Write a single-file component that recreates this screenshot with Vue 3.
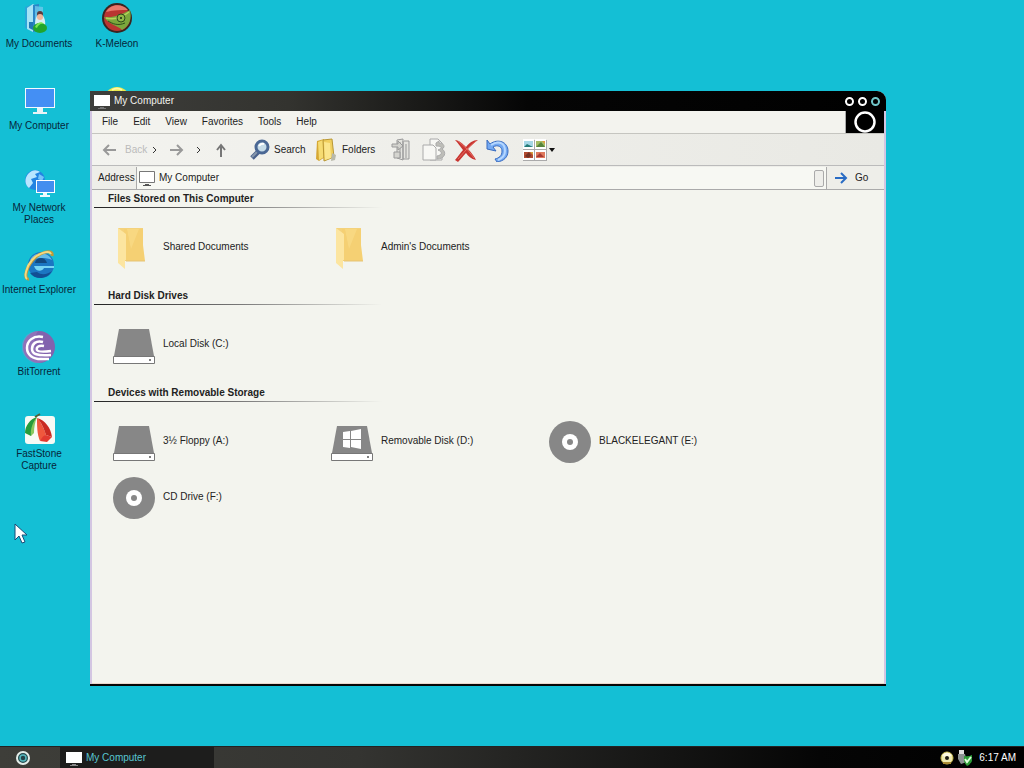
<script setup>
import { ref } from 'vue'

const address = ref('My Computer')
const menus = ['File', 'Edit', 'View', 'Favorites', 'Tools', 'Help']

const shortcuts = [
  { id: 'documents', label: 'My Documents' },
  { id: 'computer', label: 'My Computer' },
  { id: 'network', label: 'My Network Places' },
  { id: 'explorer', label: 'Internet Explorer' },
  { id: 'torrent', label: 'BitTorrent' },
  { id: 'faststone', label: 'FastStone Capture' },
]

const groups = [
  {
    title: 'Files Stored on This Computer',
    items: [
      { icon: 'folder', label: 'Shared Documents' },
      { icon: 'folder', label: "Admin's Documents" },
    ],
  },
  { title: 'Hard Disk Drives', items: [{ icon: 'disk', label: 'Local Disk (C:)' }] },
  {
    title: 'Devices with Removable Storage',
    items: [
      { icon: 'disk', label: '3½ Floppy (A:)' },
      { icon: 'windisk', label: 'Removable Disk (D:)' },
      { icon: 'disc', label: 'BLACKELEGANT (E:)' },
      { icon: 'disc', label: 'CD Drive (F:)' },
    ],
  },
]
</script>

<template>
  <div class="screen">
    <main class="desktop">
      <div class="shortcuts">
        <div class="column">
          <button v-for="s in shortcuts" :key="s.id" class="shortcut" type="button">
            <svg class="shortcut-icon" viewBox="2 0 34 34" aria-hidden="true">
              <g v-if="s.id === 'documents'">
                <path d="M5 5 13 2v27l-8-3z" fill="#2aa5d8" />
                <path d="M7 6 13 2l3 2v24l-3 2-6-3z" fill="#a6e3f5" />
                <path d="m13 3 6-1v27l-6 1z" fill="#2b86c8" />
                <path d="m15 4 8 1v23l-8 1z" fill="#6fc9ec" opacity=".8" />
                <path d="M9 20h4v8l-4-2z" fill="#2178b5" />
                <path d="M15 24c0-8 2-12 5-12s6 5 5 12z" fill="#d8eef5" />
                <circle cx="20" cy="12" r="3" fill="#5b3b3d" />
                <circle cx="20" cy="15" r="3" fill="#eeb69a" />
                <ellipse cx="20" cy="26" rx="7" ry="5" fill="#21a52c" />
                <path d="M15 25c2-5 7-6 9-3-3-1-6 1-7 4z" fill="#7be651" />
              </g>
              <g v-else-if="s.id === 'computer'">
                <path d="M5 4h30v20H5z" fill="#f4fbff" />
                <path d="M6 5h28v18H6z" fill="#448ff4" />
                <path d="M17 24h6v4h4v2H13v-2h4z" fill="#e8f3f6" />
              </g>
              <g v-else-if="s.id === 'network'">
                <circle cx="15" cy="14" r="10" fill="#2384e2" />
                <path d="M8 8c5-5 9-4 12-2l-5 2 2 3-6 2 2 4-4 5C5 19 4 13 8 8z" fill="#b9e6ff" />
                <path d="m19 8 5 3-2 4-4-2z" fill="#75c4fa" />
                <path d="M16 14h19v13H16z" fill="#fff" />
                <path d="M17 15h17v11H17z" fill="#438eef" />
                <path d="M23 27h4v2h3v2H20v-2h3z" fill="#eefaff" />
              </g>
              <g v-else-if="s.id === 'explorer'">
                <circle cx="21" cy="17" r="13" fill="#1b76c2" />
                <path d="M10 12c4-9 18-9 22 0-7-3-15-2-22 0z" fill="#64bce8" />
                <path d="M15 15c1-6 10-7 12 0z" fill="#13497f" />
                <path d="M14 18h20v2H24c-2 4-8 4-10-2z" fill="#78d5f4" />
                <path d="M10 25c4 6 16 8 22-2-4 3-10 5-15 1z" fill="#124f94" />
                <path d="M32 8C34 0 19 4 12 13 5 22 4 32 9 31" fill="none" stroke="#c39a38" stroke-width="3" />
                <path d="M31 6C29 2 18 5 12 12 6 19 4 29 7 31" fill="none" stroke="#f5d980" stroke-width="2" />
              </g>
              <g v-else-if="s.id === 'torrent'">
                <circle cx="19" cy="17" r="16" fill="#8263ae" />
                <path d="M18 1a16 16 0 1 0 9 29 19 19 0 0 1-9-29z" fill="#a58acb" opacity=".4" />
                <g fill="none" stroke="#fff" stroke-width="2.500">
                  <path d="M23 7C13 5 7 11 7 18s6 11 14 11h8" />
                  <path d="M23 12c-7-2-11 2-11 7s5 7 19 6" />
                  <path d="M24 16c-5-1-8 1-7 4 1 2 6 2 14 1" />
                </g>
              </g>
              <g v-else>
                <rect x="5" y="4" width="30" height="28" rx="3" fill="#f8faf5" />
                <path d="M17 5C10 7 5 14 5 21l6 3c1-8 3-14 6-19z" fill="#269b3b" />
                <path d="M17 5c-4 5-7 12-6 19l3-3c0-6 1-11 3-16z" fill="#8bc85e" />
                <path d="M17 6c0 7 0 17 3 23l6-6c-2-7-5-13-9-17z" fill="#f0583d" />
                <path d="M17 6c5 5 7 11 9 17l6 2c-1-9-7-17-15-19z" fill="#c92b22" />
                <path d="M20 29c2-4 4-6 6-6l6 2-5 5z" fill="#e23a30" />
                <path d="m15 5 5-3" stroke="#526037" stroke-width="2" />
              </g>
            </svg>
            <span>{{ s.label }}</span>
          </button>
        </div>
        <div class="column">
          <button class="shortcut" type="button">
            <svg class="shortcut-icon" viewBox="0 0 34 34" aria-hidden="true">
              <circle cx="17" cy="16" r="15" fill="#3b2420" />
              <circle cx="17" cy="16" r="13" fill="#b93531" />
              <path d="M6 10c4-8 16-9 22-2-7 0-14 0-22 2z" fill="#e8796c" />
              <path d="M4 15c7 1 15-1 26-7 2 8 0 16-8 20-3-4-13-5-18-13z" fill="#7ba83c" />
              <path d="M6 16c7 2 16 0 23-6" fill="none" stroke="#b7d35c" stroke-width="1.500" />
              <circle cx="21" cy="16" r="4" fill="#8fb848" stroke="#2d4a1b" />
              <circle cx="21" cy="16" r="1" fill="#172613" />
              <path d="M8 19c5 3 10 5 17 2" fill="none" stroke="#304f1c" />
            </svg>
            <span>K-Meleon</span>
          </button>
          <button class="shortcut" type="button" aria-label="Disc">
            <svg class="shortcut-icon" viewBox="0 0 34 34" aria-hidden="true">
              <circle cx="17" cy="16" r="13" fill="#e9e84b" />
              <path d="M12 6q5-3 10 0" stroke="#fff8a8" stroke-width="2" fill="none" />
            </svg>
          </button>
        </div>
      </div>

      <section class="window" aria-label="My Computer">
        <header class="titlebar">
          <svg class="monitor" viewBox="0 0 16 16" aria-hidden="true">
            <path d="M0 2h16v11H0z" fill="#fff" /><path d="M6 14h4v1h2v1H4v-1h2z" fill="#777" />
          </svg>
          <h1>My Computer</h1>
          <div class="controls">
            <button type="button" aria-label="Minimize"></button>
            <button type="button" aria-label="Maximize"></button>
            <button type="button" class="close" aria-label="Close"></button>
          </div>
        </header>

        <div class="frame">
          <div class="menubar">
            <nav class="menus">
              <button v-for="m in menus" :key="m" type="button">{{ m }}</button>
            </nav>
            <div class="brand">
              <svg viewBox="0 0 38 22" aria-hidden="true"><circle cx="19" cy="11" r="9.500" fill="none" stroke="#fff" stroke-width="2.500" /></svg>
            </div>
          </div>

          <div class="toolbar">
            <button class="tool nav-back" type="button" disabled>
              <svg viewBox="0 0 14 14" aria-hidden="true"><path d="M7 2 2 7l5 5M2 7h12" fill="none" stroke="#999" stroke-width="2" /></svg>
              <span>Back</span>
            </button>
            <button class="tool chev" type="button" aria-label="Back history"><svg viewBox="0 0 6 8" aria-hidden="true"><path d="m1 1 3 3-3 3" fill="none" stroke="#333" /></svg></button>
            <button class="tool forward" type="button" disabled aria-label="Forward">
              <svg viewBox="0 0 14 14" aria-hidden="true"><path d="m7 2 5 5-5 5M12 7H0" fill="none" stroke="#999" stroke-width="2" /></svg>
            </button>
            <button class="tool chev" type="button" aria-label="Forward history"><svg viewBox="0 0 6 8" aria-hidden="true"><path d="m1 1 3 3-3 3" fill="none" stroke="#333" /></svg></button>
            <button class="tool up" type="button" aria-label="Up">
              <svg viewBox="0 0 14 14" aria-hidden="true"><path d="m3 7 4-5 4 5M7 2v12" fill="none" stroke="#777" stroke-width="2" /></svg>
            </button>
            <button class="tool search" type="button">
              <svg viewBox="0 0 24 24" aria-hidden="true">
                <path d="m10 13-7 7" stroke="#4b618a" stroke-width="5" />
                <path d="m9 13-6 6" stroke="#8797ac" stroke-width="2" />
                <circle cx="13" cy="9" r="6" fill="#c5dbe8" stroke="#4a6794" stroke-width="3" />
                <path d="M10 8q2-3 5-2" fill="none" stroke="#fff" stroke-width="2" />
              </svg>
              <span>Search</span>
            </button>
            <button class="tool folders" type="button">
              <svg viewBox="0 0 24 24" aria-hidden="true">
                <path d="m3 3 7-2 1 18-6 4-3-2z" fill="#d6a834" />
                <path d="M4 4 9 2l1 17-5 3z" fill="#f6dc72" />
                <path d="m9 2 9-1 2 18-10 4z" fill="#f0cf5e" stroke="#b89735" />
                <path d="m10 4 6 1 1 15-6 2z" fill="#fbe68c" />
                <path d="m18 15 4 2-1 5-4 1z" fill="#b8b9aa" />
              </svg>
              <span>Folders</span>
            </button>
            <button class="tool big" type="button" disabled aria-label="Move to">
              <svg viewBox="0 0 24 24" aria-hidden="true" fill="#e4e4df" stroke="#999">
                <path d="M7 2l6-1v21l-6-2zM14 3h5v18h-6V3M10 4v16M16 6v14" /><path d="M2 6h6V3l5 5-5 4V9H2zM4 14h6v6H4z" fill="#d4d4cf" />
              </svg>
            </button>
            <button class="tool big" type="button" disabled aria-label="Copy to">
              <svg viewBox="0 0 24 24" aria-hidden="true" fill="#f7f7f4" stroke="#aaa">
                <path d="M8 1h8l4 4v17H8z" /><path d="M1 7h10l3 3v12H1z" /><path d="M14 5l3-2v2c6 0 6 5 3 6 5 3 3 10-5 10v-3c5-1 6-4 1-6 5-2 4-4-2-4z" fill="#bdbdb8" />
              </svg>
            </button>
            <button class="tool big" type="button" aria-label="Delete">
              <svg viewBox="0 0 24 24" aria-hidden="true">
                <path d="M1 2c4 0 8 4 11 7 3-4 7-7 12-7-4 3-8 6-10 9 3 3 6 7 8 11-5-1-8-4-10-7-3 3-5 6-8 9l-3-2c3-3 5-7 8-10C6 8 4 5 1 2z" fill="#c83632" />
                <path d="m4 3 9 8 7 9M22 3 12 12l-8 9" fill="none" stroke="#e36a60" />
              </svg>
            </button>
            <button class="tool undo" type="button" aria-label="Undo">
              <svg viewBox="0 0 24 24" aria-hidden="true">
                <path d="M1 2v9l9 2-3-4c5-3 9 0 9 4 0 5-3 7-7 8l2 3c7-1 11-5 11-11C22 4 12 0 4 6z" fill="#75aaf2" stroke="#386bbf" />
                <path d="M5 7c8-5 14-2 14 6 0 4-2 7-7 9" fill="none" stroke="#b5d7ff" stroke-width="2" />
              </svg>
            </button>
            <button class="tool views" type="button" aria-label="Views">
              <svg viewBox="0 0 34 24" aria-hidden="true">
                <path d="M1 2h24v21H1z" fill="#aaa" /><path d="M1 1h11v10H1zM13 1h11v10H13zM1 12h11v10H1zM13 12h11v10H13z" fill="#fff" />
                <path d="M2 3h9v6H2z" fill="#a6d7e6" /><path d="m2 9 3-3 6 3z" fill="#247b76" />
                <path d="M14 3h9v6h-9z" fill="#a5bd66" /><path d="m14 9 5-5 4 5z" fill="#56843c" /><path d="M20 3h3v3z" fill="#e19b3d" />
                <path d="M2 14h9v6H2z" fill="#b14a2e" /><path d="m3 18 4-4 2 4-3 2z" fill="#743122" /><path d="M8 14h3v3z" fill="#d8a33b" />
                <path d="M14 14h9v6h-9z" fill="#df7a5d" /><path d="m14 19 4-4 4 4z" fill="#a83932" />
                <path d="M27 10h6l-3 4z" fill="#111" />
              </svg>
            </button>
          </div>

          <form class="addressbar" @submit.prevent>
            <label for="address">Address</label>
            <div class="field">
              <svg class="address-icon" viewBox="0 0 18 18" aria-hidden="true">
                <path d="M1.500 2.500h15v11h-15z" fill="#fff" stroke="#777" /><path d="M7 15h4v1h2v1H5v-1h2z" fill="#555" />
              </svg>
              <input id="address" v-model="address" type="text" />
              <button class="drop" type="button" aria-label="Show addresses"></button>
            </div>
            <button class="go" type="submit">
              <svg viewBox="0 0 14 14" aria-hidden="true"><path d="m7 2 5 5-5 5M12 7H1" fill="none" stroke="#2a6cc4" stroke-width="2" /></svg>
              <span>Go</span>
            </button>
          </form>

          <div class="content">
            <section v-for="g in groups" :key="g.title" class="group">
              <h2>{{ g.title }}</h2>
              <div class="items">
                <button v-for="i in g.items" :key="i.label" class="item" type="button">
                  <svg viewBox="0 0 44 44" aria-hidden="true">
                    <g v-if="i.icon === 'folder'">
                      <path d="M6 3h25v5H6z" fill="#f4d27c" />
                      <path d="M12 4h19v16l2 16H13z" fill="#f5d073" />
                      <path d="M15 4h12l-8 20z" fill="#f9dc88" opacity=".7" />
                      <path d="m6 3 8 6v26h-1v9l-7-6z" fill="#fce5a0" />
                      <path d="M14 36h19" stroke="#e6c374" />
                    </g>
                    <g v-else-if="i.icon === 'disc'">
                      <circle cx="22" cy="23" r="21" fill="#878787" /><circle cx="22" cy="23" r="8" fill="#fff" /><circle cx="22" cy="23" r="3" fill="#878787" />
                    </g>
                    <g v-else>
                      <path d="M7 7h30l5 27H2z" fill="#878787" />
                      <path d="M1.500 34.500h41v7h-41z" fill="#fff" stroke="#777" />
                      <circle cx="38" cy="38" r="1" fill="#555" />
                      <path v-if="i.icon === 'windisk'" d="m13 13 7-1v8h-7zm8-1 10-2v10H21zm-8 9h7v8l-7-1zm8 0h10v9l-10-2z" fill="#fff" />
                    </g>
                  </svg>
                  <span>{{ i.label }}</span>
                </button>
              </div>
            </section>
          </div>
        </div>
      </section>

      <svg class="pointer" viewBox="0 0 14 22" aria-hidden="true">
        <path d="M1 1v16l4-4 3 7 3-1-3-7h5z" fill="#fff" stroke="#174b76" />
      </svg>
    </main>

    <footer class="taskbar">
      <button class="start" type="button" aria-label="Start">
        <svg viewBox="0 0 16 16" aria-hidden="true"><circle cx="8" cy="8" r="6" fill="#24484c" stroke="#e4eee9" stroke-width="2" /><circle cx="8" cy="8" r="3" fill="#254247" stroke="#54b8be" stroke-width="1.500" /></svg>
      </button>
      <button class="task" type="button">
        <svg class="monitor" viewBox="0 0 16 16" aria-hidden="true"><path d="M0 2h16v11H0z" fill="#fff" /><path d="M6 14h4v1h2v1H4v-1h2z" fill="#888" /></svg>
        <span>My Computer</span>
      </button>
      <div class="tray">
        <svg viewBox="0 0 16 16" aria-hidden="true"><circle cx="8" cy="8" r="6" fill="#eee9b0" stroke="#cabb4e" /><path d="M3 5q5-5 10 0L10 7H6z" fill="#fffbe1" /><circle cx="8" cy="8" r="2" fill="#1d1b12" /><path d="M4 13h8" stroke="#a98b34" stroke-width="2" /></svg>
        <svg viewBox="0 0 16 16" aria-hidden="true"><path d="M2 0h5v4H2z" fill="#ddd" /><path d="M1 4h7l2 8-6 2-3-5z" fill="#8c9292" /><path d="M7 6q4 1 8-1v6q-2 4-5 5-3-3-3-6z" fill="#2b9b35" /><path d="m8 9 2 3 4-5" fill="none" stroke="#dcffd9" stroke-width="2" /></svg>
        <time>6:17 AM</time>
      </div>
    </footer>
  </div>
</template>

<style>
html,
body {
  margin: 0;
  overflow: hidden;
}
</style>

<style scoped>
.screen {
  display: flex;
  flex-direction: column;
  height: 100vh;
  background: #14bfd5;
  color: #222;
  font-family: 'Liberation Sans', Arial, sans-serif;
  font-size: 10px;
  line-height: 12px;
}
button,
input {
  margin: 0;
  padding: 0;
  border: 0;
  background: none;
  color: inherit;
  font: inherit;
}
svg {
  display: block;
  flex: none;
}
.desktop {
  position: relative;
  flex: 1;
}
.shortcuts {
  display: flex;
}
.column {
  display: grid;
  grid-auto-rows: 82px;
  width: 78px;
  align-content: start;
}
.shortcut {
  display: flex;
  flex-direction: column;
  align-items: center;
  gap: 2px;
  padding-top: 2px;
  color: #06263a;
}
.shortcut-icon {
  width: 34px;
  height: 34px;
}
.window {
  position: absolute;
  inset: 91px 138px 60px 90px;
  display: flex;
  flex-direction: column;
  box-sizing: border-box;
  border-bottom: 2px solid #050505;
  border-radius: 0 9px 0 0;
  background: #eeeee9;
  overflow: hidden;
}
.titlebar {
  display: flex;
  align-items: center;
  height: 20px;
  flex: none;
  padding: 0 6px 0 4px;
  gap: 4px;
  background: linear-gradient(90deg, #3e3e3b 0, #33332f 25%, #050505 55%, #000);
  color: #f2f2ee;
}
h1,
h2 {
  margin: 0;
  font-size: inherit;
}
h1 {
  flex: 1;
  font-weight: normal;
}
.monitor {
  width: 16px;
  height: 16px;
}
.controls {
  display: flex;
  gap: 4px;
}
.controls button {
  width: 9px;
  height: 9px;
  box-sizing: border-box;
  border: 2px solid #fff;
  border-radius: 50%;
}
.controls .close {
  border-color: #71c7ca;
}
.frame {
  display: flex;
  flex: 1;
  flex-direction: column;
  border: solid #d3c6e2;
  border-width: 0 2px;
}
.menubar {
  display: flex;
  height: 22px;
  flex: none;
  border-bottom: 1px solid #c5c5c0;
  background: #f3f3ee;
}
.menus {
  display: flex;
  flex: 1;
  gap: 15px;
  padding-left: 10px;
}
.brand {
  width: 38px;
  border-left: 1px solid #aaa;
  background: #000;
}
.toolbar {
  display: flex;
  align-items: center;
  height: 31px;
  flex: none;
  padding-left: 10px;
  border-bottom: 1px solid #bbb;
  background: linear-gradient(90deg, #f3f3ef, #e9e9e4);
}
.tool {
  display: flex;
  align-items: center;
}
.tool svg {
  width: 24px;
  height: 24px;
}
.nav-back {
  width: 50px;
  gap: 9px;
  color: #bbb;
}
.nav-back svg,
.forward svg,
.up svg {
  width: 14px;
  height: 14px;
}
.tool.chev {
  width: 18px;
}
.chev svg {
  width: 6px;
  height: 8px;
}
.forward {
  width: 26px;
}
.up {
  width: 35px;
}
.search {
  width: 65px;
  gap: 1px;
}
.folders {
  width: 76px;
  gap: 4px;
}
.big {
  width: 32px;
}
.undo {
  width: 36px;
}
.tool.views svg {
  width: 34px;
}
.addressbar {
  display: flex;
  align-items: center;
  height: 22px;
  flex: none;
  margin-top: 1px;
  padding-left: 6px;
  gap: 4px;
  border-bottom: 1px solid #aaa;
}
.addressbar label {
  width: 34px;
}
.field {
  display: flex;
  align-items: center;
  flex: 1;
  align-self: stretch;
  gap: 3px;
  padding-right: 2px;
  border-left: 1px solid #aaa;
  border-right: 1px solid #aaa;
  background: #f7f8f3;
}
.address-icon {
  width: 18px;
  height: 18px;
  margin-left: 1px;
}
.field input {
  flex: 1;
  min-width: 0;
  outline: 0;
}
.drop {
  width: 10px;
  height: 17px;
  box-sizing: border-box;
  border: 1px solid #aaa;
  border-radius: 2px;
  background: #eeeeea;
}
.go {
  display: flex;
  align-items: center;
  width: 53px;
  gap: 7px;
  padding-left: 3px;
}
.go svg {
  width: 14px;
  height: 14px;
}
.content {
  flex: 1;
  padding-left: 2px;
  border-bottom: 1px solid #ead6cb;
  background: #f3f4ee;
}
.group h2 {
  padding: 2px 0 3px 14px;
  background: linear-gradient(90deg, #222, #777 50%, transparent) 0 100% / 288px 1px no-repeat;
}
.items {
  display: grid;
  grid-template-columns: repeat(auto-fill, 218px);
  grid-auto-rows: 56px;
  padding: 17px 0 7px 18px;
}
.group:first-child h2 {
  padding-top: 3px;
}
.item {
  display: flex;
  align-items: flex-start;
  gap: 7px;
  text-align: left;
}
.item svg {
  width: 44px;
  height: 44px;
}
.item span {
  padding-top: 16px;
}
.pointer {
  position: absolute;
  top: 523px;
  left: 14px;
  width: 14px;
  height: 22px;
}
.taskbar {
  display: flex;
  height: 22px;
  flex: none;
  box-sizing: border-box;
  border-top: 1px solid #222;
  background: linear-gradient(90deg, #3e3e39, #343431 35%, #050505 80%, #000);
}
.start {
  display: flex;
  align-items: center;
  justify-content: center;
  width: 60px;
  padding-right: 14px;
  box-sizing: border-box;
}
.start svg,
.tray svg {
  width: 16px;
  height: 16px;
}
.task {
  display: flex;
  align-items: center;
  width: 154px;
  padding-left: 6px;
  gap: 4px;
  box-sizing: border-box;
  background: #1d1d1c;
  color: #58c5d0;
}
.tray {
  display: flex;
  align-items: center;
  margin-left: auto;
  padding-right: 8px;
  gap: 2px;
  color: #fff;
}
.tray time {
  padding-left: 4px;
}
</style>
